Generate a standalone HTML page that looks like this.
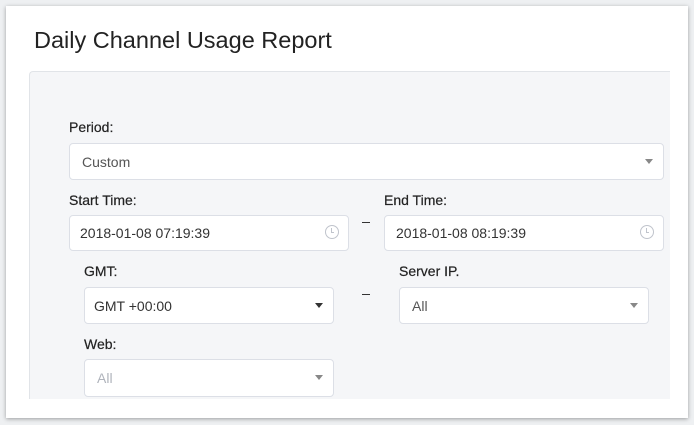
<!DOCTYPE html><html><head><style>
body{margin:0;width:694px;height:425px;background:#eef0f2;font-family:"Liberation Sans",sans-serif;position:relative;overflow:hidden}
.card{position:absolute;left:6px;top:6px;width:682px;height:412px;background:#fff;box-shadow:0 1px 4px rgba(0,0,0,.35)}
.panel{position:absolute;left:29px;top:71px;width:640px;height:327px;background:#f5f6f8;border:1px solid #e1e4e8;border-right:none;border-bottom:none;border-radius:4px 0 0 0}
.t{position:absolute;left:34px;top:27px;font-size:23.5px;color:#222}
.l{position:absolute;font-size:14px;color:#222;-webkit-text-stroke:0.2px #222}
.b{position:absolute;background:#fff;border:1px solid #dcdfe6;border-radius:4px;box-sizing:border-box;font-size:14px;color:#333;padding-left:12px;display:flex;align-items:center}
.b.sel{color:#555}
.ar{position:absolute;right:10px;top:15px;width:0;height:0;border-left:4px solid transparent;border-right:4px solid transparent;border-top:5px solid #888}
.ck{position:absolute;right:9px;top:9px;width:12px;height:12px;border:1.5px solid #c0c4cc;border-radius:50%}
.ck:after{content:"";position:absolute;left:5px;top:2px;width:2px;height:4px;border-left:1.5px solid #c0c4cc;border-bottom:1.5px solid #c0c4cc}
.d{position:absolute;width:8px;height:1px;background:#333}
</style></head><body>
<div class="card"></div>
<div class="panel"></div>
<div class="t">Daily Channel Usage Report</div>
<div class="l" style="left:69px;top:119px">Period:</div>
<div class="b sel" style="left:69px;top:143px;width:595px;height:37px">Custom<span class="ar"></span></div>
<div class="l" style="left:69px;top:192px">Start Time:</div>
<div class="b" style="left:69px;top:215px;width:280px;height:36px;padding-left:10px">2018-01-08 07:19:39<span class="ck"></span></div>
<div class="d" style="left:362px;top:222px"></div>
<div class="l" style="left:384px;top:192px">End Time:</div>
<div class="b" style="left:384px;top:215px;width:280px;height:36px;padding-left:11px">2018-01-08 08:19:39<span class="ck"></span></div>
<div class="l" style="left:84px;top:263px">GMT:</div>
<div class="b" style="left:84px;top:287px;width:250px;height:37px;padding-left:9px">GMT +00:00<span class="ar" style="border-top-color:#333"></span></div>
<div class="d" style="left:362px;top:294px"></div>
<div class="l" style="left:399px;top:263px">Server IP.</div>
<div class="b sel" style="left:399px;top:287px;width:250px;height:37px">All<span class="ar"></span></div>
<div class="l" style="left:84px;top:336px">Web:</div>
<div class="b" style="left:84px;top:359px;width:250px;height:38px;color:#b0b4bc">All<span class="ar"></span></div>
</body></html>
